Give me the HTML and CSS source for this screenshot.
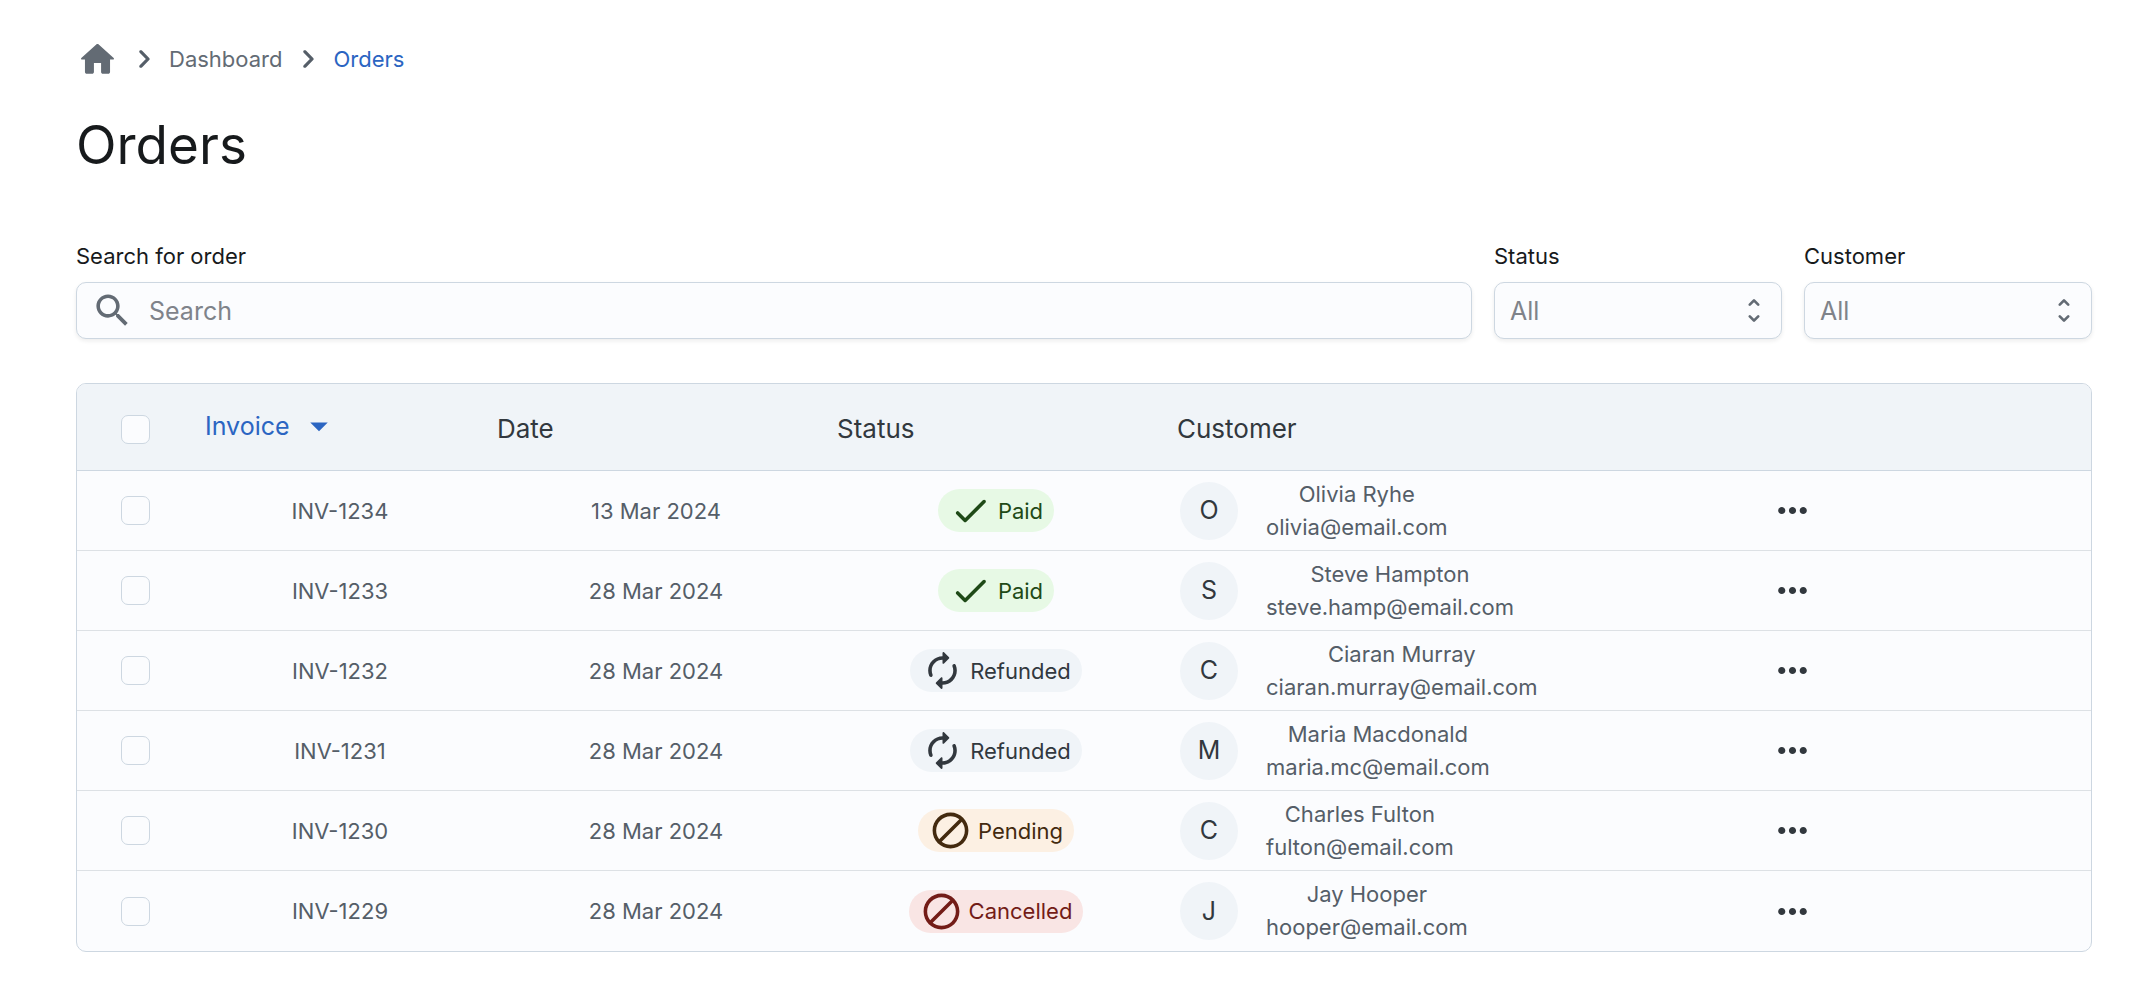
FILE: index.html
```
<!DOCTYPE html>
<html lang="en">
<head>
<meta charset="utf-8">
<title>Orders</title>
<meta name="viewport" content="width=device-width, initial-scale=1">
<link rel="stylesheet" href="styles.css">
</head>
<body>
<svg class="sprite" aria-hidden="true">
  <symbol id="i-home" viewBox="0 0 24 24"><path d="M10 19v-5h4v5c0 .55.45 1 1 1h3c.55 0 1-.45 1-1v-7h1.7c.46 0 .68-.57.33-.87L12.67 3.6c-.38-.34-.96-.34-1.34 0l-8.36 7.53c-.34.3-.13.87.33.87H5v7c0 .55.45 1 1 1h3c.55 0 1-.45 1-1z"/></symbol>
  <symbol id="i-chevron" viewBox="0 0 24 24"><path d="M9.29 6.71c-.39.39-.39 1.02 0 1.41L13.17 12l-3.88 3.88c-.39.39-.39 1.02 0 1.41.39.39 1.02.39 1.41 0l4.59-4.59c.39-.39.39-1.02 0-1.41L10.7 6.7c-.38-.38-1.02-.38-1.41.01z"/></symbol>
  <symbol id="i-search" viewBox="0 0 24 24"><path d="M15.5 14h-.79l-.28-.27C15.41 12.59 16 11.11 16 9.5 16 5.91 13.09 3 9.5 3S3 5.91 3 9.5 5.91 16 9.5 16c1.61 0 3.09-.59 4.23-1.57l.27.28v.79l5 4.99L20.49 19l-4.99-5zm-6 0C7.01 14 5 11.99 5 9.5S7.01 5 9.5 5 14 7.01 14 9.5 11.99 14 9.5 14z"/></symbol>
  <symbol id="i-unfold" viewBox="0 0 24 24"><path d="m12 5.83 2.46 2.46c.39.39 1.02.39 1.41 0 .39-.39.39-1.02 0-1.41L12.7 3.7a.9959.9959 0 0 0-1.41 0L8.12 6.88c-.39.39-.39 1.02 0 1.41.39.39 1.02.39 1.41 0L12 5.83zm0 12.34-2.46-2.46a.9959.9959 0 0 0-1.41 0c-.39.39-.39 1.02 0 1.41l3.17 3.18c.39.39 1.02.39 1.41 0l3.17-3.17c.39-.39.39-1.02 0-1.41a.9959.9959 0 0 0-1.41 0L12 18.17z"/></symbol>
  <symbol id="i-drop" viewBox="0 0 24 24"><path d="m7 10 5 5 5-5z"/></symbol>
  <symbol id="i-check" viewBox="0 0 24 24"><path d="M9 16.17 5.53 12.7a.9959.9959 0 0 0-1.41 0c-.39.39-.39 1.02 0 1.41l4.18 4.18c.39.39 1.02.39 1.41 0L20.29 7.71c.39-.39.39-1.02 0-1.41a.9959.9959 0 0 0-1.41 0L9 16.17z"/></symbol>
  <symbol id="i-renew" viewBox="0 0 24 24"><path d="M12 6v1.79c0 .45.54.67.85.35l2.79-2.79c.2-.2.2-.51 0-.71l-2.79-2.79c-.31-.31-.85-.09-.85.36V4c-4.42 0-8 3.58-8 8 0 1.04.2 2.04.57 2.95.27.67 1.13.85 1.64.34.27-.27.38-.68.23-1.04C6.15 13.56 6 12.79 6 12c0-3.31 2.69-6 6-6zm5.79 2.71c-.27.27-.38.69-.23 1.04.28.7.44 1.46.44 2.25 0 3.31-2.69 6-6 6v-1.79c0-.45-.54-.67-.85-.35l-2.79 2.79c-.2.2-.2.51 0 .71l2.79 2.79c.31.31.85.09.85-.35V20c4.42 0 8-3.58 8-8 0-1.04-.2-2.04-.57-2.95-.27-.67-1.13-.85-1.64-.34z"/></symbol>
  <symbol id="i-block" viewBox="0 0 24 24"><path d="M12 2C6.48 2 2 6.48 2 12s4.48 10 10 10 10-4.480 10-10S17.520 2 12 2zM4 12c0-4.420 3.580-8 8-8 1.850 0 3.550.630 4.900 1.690L5.690 16.900C4.630 15.550 4 13.850 4 12zm8 8c-1.850 0-3.550-.630-4.900-1.690L18.310 7.100C19.370 8.450 20 10.150 20 12c0 4.420-3.580 8-8 8z"/></symbol>
  <symbol id="i-more" viewBox="0 0 24 24"><path d="M6 10c-1.100 0-2 .9-2 2s.9 2 2 2 2-.9 2-2-.9-2-2-2zm12 0c-1.100 0-2 .9-2 2s.9 2 2 2 2-.9 2-2-.9-2-2-2zm-6 0c-1.100 0-2 .9-2 2s.9 2 2 2 2-.9 2-2-.9-2-2-2z"/></symbol>
</svg>
<main class="page">
  <nav class="crumbs" aria-label="Breadcrumb">
    <a class="crumb-home" href="#" aria-label="Home"><svg class="icon-home"><use href="#i-home"/></svg></a>
    <svg class="icon-sep"><use href="#i-chevron"/></svg>
    <a class="crumb" href="#">Dashboard</a>
    <svg class="icon-sep"><use href="#i-chevron"/></svg>
    <a class="crumb crumb-current" href="#" aria-current="page">Orders</a>
  </nav>
  <h1 class="title">Orders</h1>
  <form class="filters">
    <div class="field field-search">
      <label class="label" for="search">Search for order</label>
      <div class="control">
        <svg class="icon-search"><use href="#i-search"/></svg>
        <input class="input" id="search" type="text" placeholder="Search">
      </div>
    </div>
    <div class="field">
      <label class="label" for="status">Status</label>
      <div class="control control-select">
        <select class="select" id="status"><option>All</option></select>
        <svg class="icon-unfold"><use href="#i-unfold"/></svg>
      </div>
    </div>
    <div class="field">
      <label class="label" for="customer">Customer</label>
      <div class="control control-select">
        <select class="select" id="customer"><option>All</option></select>
        <svg class="icon-unfold"><use href="#i-unfold"/></svg>
      </div>
    </div>
  </form>
  <div class="sheet">
    <table class="orders">
      <colgroup><col class="col-check"><col class="col-invoice"><col class="col-date"><col class="col-status"><col class="col-customer"><col></colgroup>
      <thead>
        <tr>
          <th class="cell-check"><input class="check" type="checkbox" aria-label="Select all"></th>
          <th><button class="sort" type="button">Invoice<svg class="icon-drop"><use href="#i-drop"/></svg></button></th>
          <th>Date</th><th>Status</th><th>Customer</th><th></th>
        </tr>
      </thead>
      <tbody>
        <tr>
          <td class="cell-check"><input class="check" type="checkbox" aria-label="Select INV-1234"></td>
          <td>INV-1234</td><td>13 Mar 2024</td>
          <td><span class="chip chip-paid"><svg class="icon-chip"><use href="#i-check"/></svg>Paid</span></td>
          <td><div class="person"><span class="avatar">O</span><div><div>Olivia Ryhe</div><div>olivia@email.com</div></div></div></td>
          <td class="cell-menu"><button class="more" type="button" aria-label="Actions"><svg class="icon-more"><use href="#i-more"/></svg></button></td>
        </tr>
        <tr>
          <td class="cell-check"><input class="check" type="checkbox" aria-label="Select INV-1233"></td>
          <td>INV-1233</td><td>28 Mar 2024</td>
          <td><span class="chip chip-paid"><svg class="icon-chip"><use href="#i-check"/></svg>Paid</span></td>
          <td><div class="person"><span class="avatar">S</span><div><div>Steve Hampton</div><div>steve.hamp@email.com</div></div></div></td>
          <td class="cell-menu"><button class="more" type="button" aria-label="Actions"><svg class="icon-more"><use href="#i-more"/></svg></button></td>
        </tr>
        <tr>
          <td class="cell-check"><input class="check" type="checkbox" aria-label="Select INV-1232"></td>
          <td>INV-1232</td><td>28 Mar 2024</td>
          <td><span class="chip chip-refunded"><svg class="icon-chip"><use href="#i-renew"/></svg>Refunded</span></td>
          <td><div class="person"><span class="avatar">C</span><div><div>Ciaran Murray</div><div>ciaran.murray@email.com</div></div></div></td>
          <td class="cell-menu"><button class="more" type="button" aria-label="Actions"><svg class="icon-more"><use href="#i-more"/></svg></button></td>
        </tr>
        <tr>
          <td class="cell-check"><input class="check" type="checkbox" aria-label="Select INV-1231"></td>
          <td>INV-1231</td><td>28 Mar 2024</td>
          <td><span class="chip chip-refunded"><svg class="icon-chip"><use href="#i-renew"/></svg>Refunded</span></td>
          <td><div class="person"><span class="avatar">M</span><div><div>Maria Macdonald</div><div>maria.mc@email.com</div></div></div></td>
          <td class="cell-menu"><button class="more" type="button" aria-label="Actions"><svg class="icon-more"><use href="#i-more"/></svg></button></td>
        </tr>
        <tr>
          <td class="cell-check"><input class="check" type="checkbox" aria-label="Select INV-1230"></td>
          <td>INV-1230</td><td>28 Mar 2024</td>
          <td><span class="chip chip-pending"><svg class="icon-chip"><use href="#i-block"/></svg>Pending</span></td>
          <td><div class="person"><span class="avatar">C</span><div><div>Charles Fulton</div><div>fulton@email.com</div></div></div></td>
          <td class="cell-menu"><button class="more" type="button" aria-label="Actions"><svg class="icon-more"><use href="#i-more"/></svg></button></td>
        </tr>
        <tr>
          <td class="cell-check"><input class="check" type="checkbox" aria-label="Select INV-1229"></td>
          <td>INV-1229</td><td>28 Mar 2024</td>
          <td><span class="chip chip-cancelled"><svg class="icon-chip"><use href="#i-block"/></svg>Cancelled</span></td>
          <td><div class="person"><span class="avatar">J</span><div><div>Jay Hooper</div><div>hooper@email.com</div></div></div></td>
          <td class="cell-menu"><button class="more" type="button" aria-label="Actions"><svg class="icon-more"><use href="#i-more"/></svg></button></td>
        </tr>
      </tbody>
    </table>
  </div>
</main>
</body>
</html>
```
FILE: styles.css
```
* { box-sizing: border-box; }

body {
  margin: 0;
  background: #fff;
  color: #171a1c;
  font-family: Inter, "Liberation Sans", sans-serif;
  font-size: 22px;
  line-height: 32px;
}

svg { display: block; flex: none; fill: currentColor; }
button, input, select { font: inherit; color: inherit; }
.sprite { position: absolute; width: 0; height: 0; }

.page { padding: 40px 54px 40px 76px; }

/* Breadcrumbs */
.crumbs { display: flex; align-items: center; height: 38px; color: #636b74; }
.crumb { color: inherit; text-decoration: none; }
.crumb-home { color: inherit; margin-right: 6px; }
.crumb-current { color: #2b65c2; }
.icon-home { width: 43px; height: 43px; }
.icon-sep { width: 38px; height: 38px; margin: 0 6px 0 7px; color: #555e68; }
.crumb-home + .icon-sep { margin-left: 0; }

.title {
  margin: 34px 0 0;
  font-size: 53px;
  font-weight: 400;
  font-variation-settings: "opsz" 32;
  line-height: 66px;
}

/* Filters */
.filters { display: flex; gap: 22px; margin-top: 62px; }
.field { flex: 0 0 288px; }
.field-search { flex: 1 1 0; }
.label { display: block; margin-bottom: 10px; }
.control {
  display: flex;
  align-items: center;
  height: 57px;
  border: 1px solid #cdd7e1;
  border-radius: 10px;
  background: #fbfcfe;
  box-shadow: 0 2px 4px rgba(21, 21, 21, 0.08);
  color: #636b74;
  font-size: 25px;
}
.icon-search { width: 43px; height: 43px; margin: 0 15px 0 14px; }
.input { flex: 1; min-width: 0; padding: 0; border: 0; outline: 0; background: none; }
.input::placeholder { color: #7f838a; opacity: 1; }
.control-select { position: relative; }
.select {
  width: 100%;
  height: 100%;
  padding: 0 15px;
  border: 0;
  outline: 0;
  background: none;
  appearance: none;
  color: #7f838a;
}
.icon-unfold { position: absolute; right: 11px; width: 32px; height: 43px; pointer-events: none; }

/* Orders table */
.sheet {
  margin-top: 44px;
  border: 1px solid #cdd7e1;
  border-radius: 10px;
  background: #fbfcfe;
  overflow: hidden;
}
.orders { width: 100%; border-collapse: separate; border-spacing: 0; table-layout: fixed; }
.col-check { width: 117px; }
.col-invoice { width: 292px; }
.col-date, .col-status { width: 340px; }
.col-customer { width: 586px; }

th {
  height: 87px;
  padding: 4px 11px 0;
  border-bottom: 1px solid #cdd7e1;
  background: #f0f4f8;
  color: #32383e;
  font-size: 26px;
  font-weight: 400;
  text-align: left;
}
td {
  height: 80px;
  padding: 0 11px;
  border-bottom: 1px solid #dde1e5;
  color: #555e68;
  text-align: center;
}
tbody tr:last-child td { border-bottom: 0; }

.cell-check { padding-right: 0; padding-left: 0; text-align: center; }
.check {
  display: block;
  width: 29px;
  height: 29px;
  margin: 0 auto;
  border: 1px solid #cdd7e1;
  border-radius: 7px;
  background: #fbfcfe;
  appearance: none;
}
.sort {
  display: flex;
  align-items: center;
  gap: 8px;
  padding: 0 0 6px;
  border: 0;
  background: none;
  color: #2b65c2;
  font-size: 25px;
}
.icon-drop { width: 42px; height: 42px; }

.chip {
  display: inline-flex;
  align-items: center;
  gap: 6px;
  height: 43px;
  padding: 0 11px;
  border-radius: 22px;
  vertical-align: middle;
}
.icon-chip { width: 43px; height: 43px; }
.chip-paid { background: #e7f9e5; color: #1f4a17; }
.chip-refunded { background: #f0f4f8; color: #32383e; }
.chip-pending { background: #fcf0e3; color: #432a0f; }
.chip-cancelled { background: #f9e5e4; color: #731c17; }

.person { display: flex; align-items: center; gap: 28px; padding-left: 3px; line-height: 33px; }
.avatar {
  display: grid;
  place-items: center;
  width: 58px;
  height: 58px;
  border-radius: 50%;
  background: #f0f4f8;
  color: #32383e;
  font-size: 25px;
}
.cell-menu { text-align: left; }
.more { display: block; padding: 0 0 0 8px; border: 0; background: none; color: #32383e; }
.icon-more { width: 43px; height: 43px; }
```
